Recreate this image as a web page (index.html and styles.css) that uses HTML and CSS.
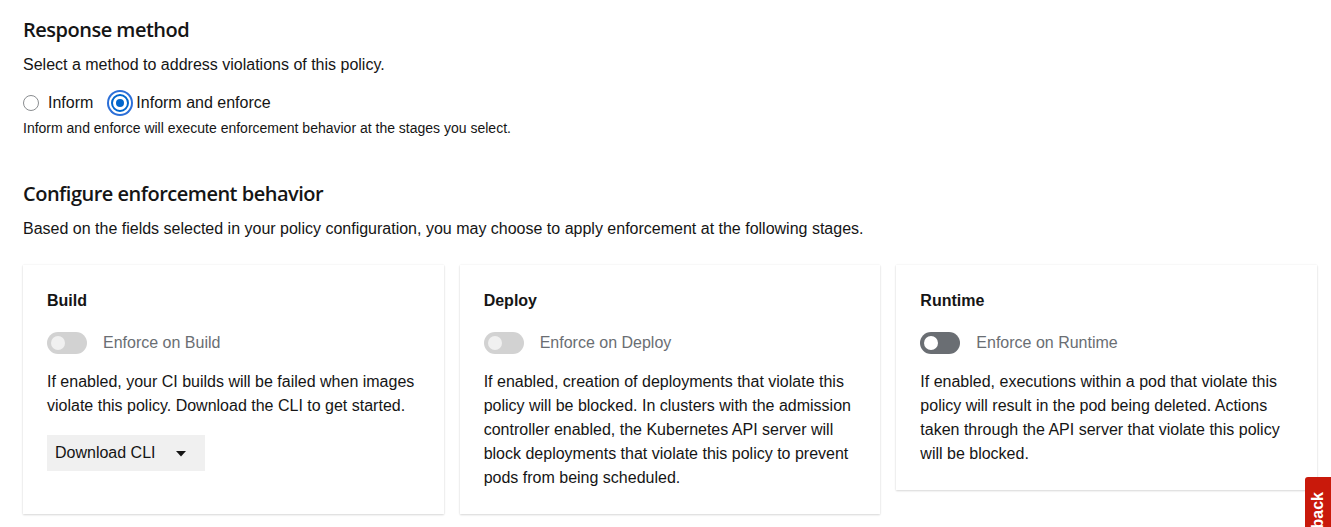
FILE: index.html
```html
<!DOCTYPE html>
<html lang="en">
<head>
<meta charset="utf-8">
<title>Response method</title>
<link rel="stylesheet" href="styles.css">
</head>
<body>
<main class="page">
  <section class="section">
    <h2 class="title">Response method</h2>
    <p class="desc">Select a method to address violations of this policy.</p>
    <div class="radios">
      <label class="radio"><span class="radio-dot"></span><span>Inform</span></label>
      <label class="radio checked"><span class="radio-dot"></span><span>Inform and enforce</span></label>
    </div>
    <p class="helper">Inform and enforce will execute enforcement behavior at the stages you select.</p>
  </section>

  <section class="section second">
    <h2 class="title">Configure enforcement behavior</h2>
    <p class="desc">Based on the fields selected in your policy configuration, you may choose to apply enforcement at the following stages.</p>
    <div class="cards">
      <div class="card">
        <h3 class="card-title">Build</h3>
        <div class="switch-row"><span class="switch disabled"><span class="knob"></span></span><span class="switch-label">Enforce on Build</span></div>
        <p class="card-text">If enabled, your CI builds will be failed when images violate this policy. Download the CLI to get started.</p>
        <button class="dropdown">Download CLI <svg class="caret" width="10" height="6" viewBox="0 0 10 6"><path d="M0 0h10L5 5.5z" fill="#151515"/></svg></button>
      </div>
      <div class="card">
        <h3 class="card-title">Deploy</h3>
        <div class="switch-row"><span class="switch disabled"><span class="knob"></span></span><span class="switch-label">Enforce on Deploy</span></div>
        <p class="card-text">If enabled, creation of deployments that violate this policy will be blocked. In clusters with the admission controller enabled, the Kubernetes API server will block deployments that violate this policy to prevent pods from being scheduled.</p>
      </div>
      <div class="card">
        <h3 class="card-title">Runtime</h3>
        <div class="switch-row"><span class="switch"><span class="knob"></span></span><span class="switch-label">Enforce on Runtime</span></div>
        <p class="card-text">If enabled, executions within a pod that violate this policy will result in the pod being deleted. Actions taken through the API server that violate this policy will be blocked.</p>
      </div>
    </div>
  </section>
</main>
<div class="feedback"><span>Feedback</span></div>
</body>
</html>
```
FILE: styles.css
```css
* { box-sizing: border-box; }
html, body { margin: 0; padding: 0; background: #fff; }
body {
  font-family: "Liberation Sans", Arial, sans-serif;
  color: #151515;
  font-size: 16px;
  line-height: 24px;
  overflow: hidden;
  height: 527px;
}
.page { padding: 15px 14px 0 23px; }
.title {
  margin: 0;
  font-size: 20px;
  line-height: 30px;
  font-weight: 600;
  font-family: "Open Sans", "Liberation Sans", sans-serif;
  letter-spacing: -0.5px;
}
.desc { margin: 8px 0 0; font-size: 16px; line-height: 24px; }
.radios { display: flex; gap: 14px; margin-top: 14px; }
.radio { display: flex; align-items: center; gap: 9px; line-height: 24px; }
.radio-dot {
  width: 16px; height: 16px; border-radius: 50%;
  border: 1px solid #8a8d90; background: #fff; position: relative;
}
.radio.checked .radio-dot {
  width: 18px; height: 18px;
  border: 2px solid #0066cc;
  box-shadow: 0 0 0 2px #fff, 0 0 0 4px #2b6fd8;
  margin-left: 4px;
}
.radio.checked .radio-dot::after {
  content: ""; position: absolute; left: 3px; top: 3px;
  width: 8px; height: 8px; border-radius: 50%; background: #0066cc;
}
.radio.checked { gap: 7px; }
.helper { margin: 3px 0 0; font-size: 14px; line-height: 21px; }
.second { margin-top: 40px; }
.cards {
  display: grid;
  grid-template-columns: repeat(3, 1fr);
  gap: 16px;
  margin-top: 24px;
  align-items: start;
}
.card {
  padding: 24px;
  background: #fff;
  box-shadow: 0 1px 2px rgba(3,3,3,.14), 0 0 2px rgba(3,3,3,.07);
  min-height: 249px;
}
.card:last-child { min-height: 225px; }
.card-title { margin: 0; font-size: 16px; line-height: 24px; font-weight: 700; }
.switch-row { display: flex; align-items: center; gap: 16px; margin-top: 18px; }
.switch {
  width: 40px; height: 22px; border-radius: 11px; background: #6a6e73;
  position: relative; flex: none;
}
.switch .knob {
  position: absolute; left: 4px; top: 4px; width: 14px; height: 14px;
  border-radius: 50%; background: #fff;
}
.switch.disabled { background: #d2d2d2; }
.switch.disabled .knob { background: #f0f0f0; }
.switch-label { color: #6a6e73; }
.card-text { margin: 15px 0 0; }
.dropdown {
  margin-top: 17px;
  display: inline-flex; align-items: center; gap: 20px;
  height: 36px; padding: 0 19px 0 8px;
  background: #f0f0f0; border: none;
  font: inherit; color: #151515;
}
.caret { margin-top: 1px; }
.feedback {
  position: fixed; right: 0; top: 477px;
  width: 26px; height: 120px; background: #c9190b;
  border-radius: 3px 0 0 0;
  overflow: hidden;
}
.feedback span {
  position: absolute; left: 4px; top: 15px;
  writing-mode: vertical-rl; transform: rotate(180deg);
  color: #fff; font-size: 16px; font-weight: 700; line-height: 18px;
}
```
